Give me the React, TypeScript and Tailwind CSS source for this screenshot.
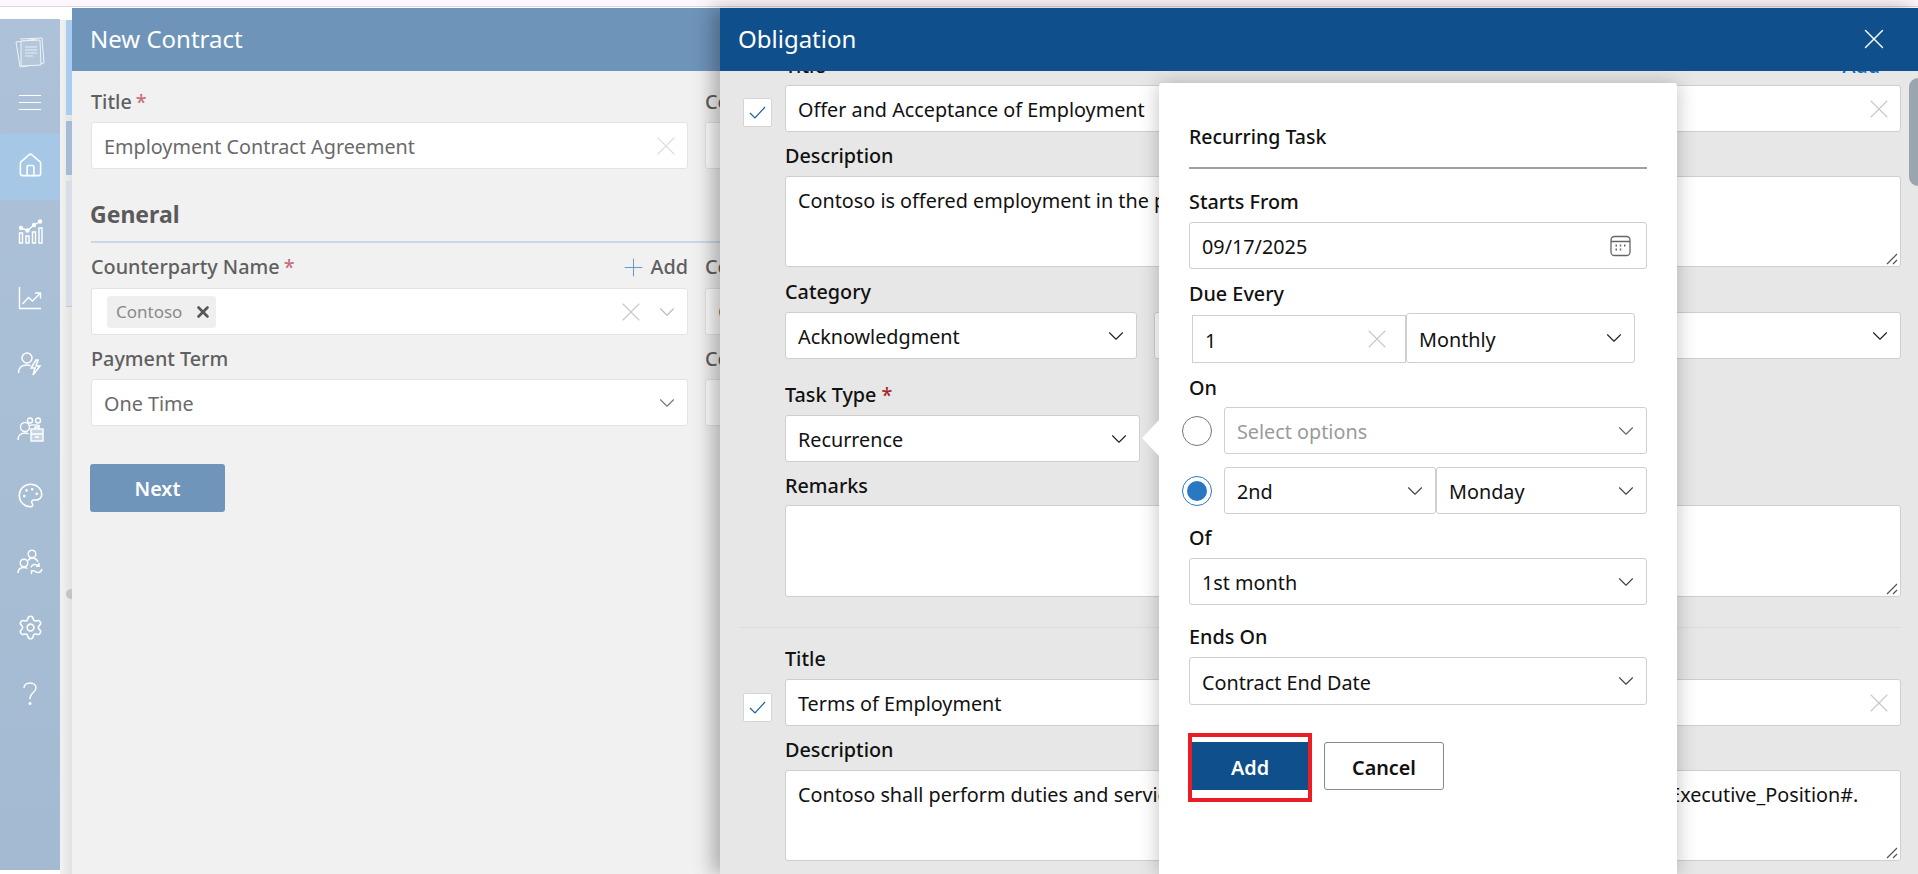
import { ReactNode } from "react";
import { ChevronDown, House, Palette, Plus, Settings, X } from "lucide-react";
import { twMerge } from "tailwind-merge";

const Logo = () => (
  <svg width="32" height="32" viewBox="0 0 32 32" fill="none" stroke="#fff" strokeWidth="1" opacity="0.8">
    <path d="M2 6 L22 3 L26 28 L6 31 Z" />
    <path d="M6 3 L28 2 L30 27 L10 30" />
    <path d="M7 5 L26 4 L27 29 L7 30 Z" fill="#b7c9dc" />
    <path d="M11 11h12M11 14h12M11 17h12M11 20h8" strokeWidth="1.4" opacity="0.6" />
  </svg>
);

const BarsIcon = () => (
  <svg width="25" height="25" viewBox="0 0 25 25" fill="none" stroke="#fff" strokeWidth="1.4">
    <path d="M1.500 14h3v10h-3zM8 17h3v7H8zM14.500 13h3v11h-3zM21 9h3v15h-3z" />
    <path d="M3 9l6.500 2.500L16 6l6-3.500" />
    <circle cx="3" cy="9" r="1.500" fill="#fff" />
    <circle cx="9.500" cy="11.500" r="1.500" fill="#fff" />
    <circle cx="16" cy="6" r="1.500" fill="#fff" />
    <circle cx="22" cy="2.500" r="1.500" fill="#fff" />
  </svg>
);

const TrendIcon = () => (
  <svg width="24" height="24" viewBox="0 0 24 24" fill="none" stroke="#fff" strokeWidth="1.4">
    <path d="M1.500 1v21.500H23" />
    <path d="M4.500 18l6-6.500 4 3.500 7.500-7.500" />
    <path d="M17 7h5.500v5.500" />
  </svg>
);

const UserBolt = () => (
  <svg width="26" height="26" viewBox="0 0 26 26" fill="none" stroke="#fff" strokeWidth="1.5">
    <circle cx="10" cy="7" r="5" />
    <path d="M1.500 22c0-5 3-8 8.500-8 1.500 0 2.500.2 3.500.6" />
    <path d="M19 9l-5 8h4l-2 7 7-9h-4l2-6z" />
  </svg>
);

const UsersCase = () => (
  <svg width="27" height="26" viewBox="0 0 27 26" fill="none" stroke="#fff" strokeWidth="1.4">
    <circle cx="8" cy="10" r="4.500" />
    <path d="M1 23c0-4.500 3-7 7-7 1.500 0 2.500.3 3.500.8" />
    <circle cx="13" cy="3.500" r="2.500" />
    <circle cx="21" cy="3.500" r="2.500" />
    <path d="M12 9c2-1.500 8-1.500 11 0" />
    <rect x="14" y="12" width="12" height="12" fill="#fff" fillOpacity="0.35" />
    <path d="M14 17h12M18 12V10h4v2M18 20h4" />
  </svg>
);

const UsersSync = () => (
  <svg width="26" height="26" viewBox="0 0 26 26" fill="none" stroke="#fff" strokeWidth="1.5">
    <circle cx="15" cy="5" r="3.800" />
    <circle cx="7" cy="14" r="3.800" />
    <path d="M1 24c0-3 2-5.500 6-5.500 1.500 0 2.500.3 3.500 1M11 11.500c1-1.500 2.500-2.500 4-2.500 3 0 5 1.500 6 4" />
    <path d="M14 18.500c.5-2 2-3 4-3 1.500 0 2.500.5 3.500 1.500M25 20c-.5 2-2 3.500-4 3.500-1.500 0-2.500-.5-3.500-1.500" />
    <path d="M22 14v3.200h-3M14.500 25v-3.200h3" />
  </svg>
);

const Question = () => (
  <svg width="16" height="24" viewBox="0 0 16 24" fill="none" stroke="#fff" strokeWidth="1.4">
    <path d="M2 6c0-3 2.500-5 6-5s6 2 6 5c0 4.500-6 4.500-6 10v1" />
    <circle cx="8" cy="21.500" r="0.800" fill="#fff" />
  </svg>
);

const CalendarIcon = () => (
  <svg className="mr-[5px]" width="21" height="22" viewBox="0 0 21 22" fill="none" stroke="#666" strokeWidth="1.300">
    <rect x="1" y="1.500" width="19" height="19" rx="3.500" />
    <path d="M1 6.500h19" />
    <path d="M5.500 10.500h1.500M9.800 10.500h1.500M14 10.500h1.500M5.500 14.500h1.500M9.800 14.500h1.500" strokeWidth="1.800" />
  </svg>
);

const Check = () => (
  <svg width="17" height="13" viewBox="0 0 17 13" fill="none" stroke="#1f5f9e" strokeWidth="1.200">
    <path d="M1 7l5 5L16 1" />
  </svg>
);

const Grip = () => (
  <svg className="absolute right-[2px] bottom-[1px]" width="12" height="12" viewBox="0 0 12 12" stroke="#555" strokeWidth="1.200">
    <path d="M1 11L11 1M7 11L11 7" />
  </svg>
);

const Chevron = ({ className }: { className?: string }) => (
  <ChevronDown size={26} strokeWidth={1} className={twMerge("shrink-0 -m-[3px] text-[#222]", className)} />
);

const Clear = ({ className }: { className?: string }) => (
  <X size={32} strokeWidth={0.8} className={twMerge("shrink-0 -m-[5px] text-[#c8c8c8]", className)} />
);

// Noto Sans sits a little high in the box
const Txt = ({ className, children }: { className?: string; children: ReactNode }) => (
  <span className={twMerge("pt-[3px] leading-[24px]", className)}>{children}</span>
);

const Box = ({ className, children }: { className?: string; children?: ReactNode }) => (
  <div className={twMerge("flex items-center bg-white border rounded-[3px] whitespace-nowrap overflow-hidden", className)}>
    {children}
  </div>
);

// dark form controls, in the Obligation panel and the popover
const Field = ({ className, children }: { className?: string; children?: ReactNode }) => (
  <Box className={twMerge("h-[47px] border-[#cfcfcf] pl-[12px] pr-[10px] justify-between text-[#111]", className)}>{children}</Box>
);

const Area = ({ className, children }: { className?: string; children?: ReactNode }) => (
  <div className={twMerge("relative h-[91px] bg-white border border-[#cfcfcf] rounded-[3px] pl-[12px] pt-[9px] text-[#111] whitespace-nowrap overflow-hidden", className)}>
    {children}
    <Grip />
  </div>
);

const Label = ({ className, children, req }: { className?: string; children: ReactNode; req?: boolean }) => (
  <div className={twMerge("h-[24px] leading-[24px] font-medium text-[#111]", className)}>
    {children}
    {req && <span className="ml-[5px] text-[#a4262c]">*</span>}
  </div>
);

const PaleLabel = ({ className, children, req }: { className?: string; children: ReactNode; req?: boolean }) => (
  <div className={twMerge("h-[24px] leading-[24px] font-medium text-[#5f5f5f] whitespace-nowrap", className)}>
    {children}
    {req && <span className="ml-[4px] text-[#c4707a]">*</span>}
  </div>
);

const PaleBox = ({ className, children }: { className?: string; children?: ReactNode }) => (
  <Box className={twMerge("h-[47px] border-[#e3e3e3] pl-[12px] pr-[10px] text-[#6a6a6a]", className)}>{children}</Box>
);

const navIcons = [
  <BarsIcon />,
  <TrendIcon />,
  <UserBolt />,
  <UsersCase />,
  <Palette size={27} strokeWidth={1.4} />,
  <UsersSync />,
  <Settings size={27} strokeWidth={1.4} />,
  <Question />,
];

const Sidebar = () => (
  <aside className="w-[60px] h-[851px] mt-[19px] shrink-0 flex flex-col items-center text-white bg-gradient-to-b from-[#adc2d8] to-[#a3bad2]">
    <div className="h-[66px] pt-[17px]">
      <Logo />
    </div>
    <div className="h-[49px] pt-[10px] flex flex-col gap-[6px]">
      <div className="w-[22px] h-px bg-white" />
      <div className="w-[22px] h-px bg-white" />
      <div className="w-[22px] h-px bg-white" />
    </div>
    <div className="w-full h-[66px] pb-[4px] bg-[#a7c7e7] rounded-[3px] flex items-center justify-center">
      <House size={27} strokeWidth={1.4} />
    </div>
    {navIcons.map((icon, i) => (
      <div key={i} className="w-full h-[66px] pb-[3px] flex items-center justify-center">
        {icon}
      </div>
    ))}
  </aside>
);

const BehindStrip = () => (
  <div className="relative w-[12px] h-[854px] mt-[20px] shrink-0 pl-[6px] flex flex-col gap-[6px] bg-gradient-to-r from-[#f2f2f2] to-[#e2e2e2]">
    <div className="h-[95px] bg-[#a9cdee]" />
    <div className="h-[54px] bg-[#a4bcd6]" />
    <div className="h-[126px] bg-[#d7dee8] border-b border-[#b9c8d8]" />
    <div className="absolute left-[6px] top-[569px] w-[6px] h-[10px] rounded-l-full bg-[#c4c4c4]" />
  </div>
);

const NewContract = () => (
  <section className="absolute left-[72px] top-[8px] w-[648px] h-[866px] bg-[#f1f1f1] overflow-hidden text-[19.800px]">
    <header className="h-[63px] pb-[2px] bg-[#6e94ba] flex items-center pl-[18px] text-[24px] text-white">New Contract</header>
    <div className="px-[19px] pt-[19px] w-[1300px]">
      <div className="grid grid-cols-[597px_597px] gap-x-[17px]">
        <div>
          <PaleLabel req>Title</PaleLabel>
          <PaleBox className="mt-[8px]">
            <Txt className="flex-1">Employment Contract Agreement</Txt>
            <Clear className="text-[#dddddd]" />
          </PaleBox>
        </div>
        <div>
          <PaleLabel>Contract Type</PaleLabel>
          <PaleBox className="mt-[8px]" />
        </div>
      </div>
      <h2 className="mt-[29px] -ml-px h-[32px] leading-[32px] text-[23px] font-bold text-[#5a5a5a]">General</h2>
      <div className="mt-[11px] h-[2px] bg-[#c9d8e8]" />
      <div className="mt-[12px] grid grid-cols-[597px_597px] gap-x-[17px]">
        <div>
          <div className="flex justify-between">
            <PaleLabel req>Counterparty Name</PaleLabel>
            <span className="flex items-center gap-[3px] text-[#5f5f5f] font-medium leading-[24px]">
              <Plus size={29} strokeWidth={0.8} className="text-[#5f95d0] -my-[3px]" />
              Add
            </span>
          </div>
          <PaleBox className="mt-[9px] pl-[15px]">
            <span className="flex items-center gap-[12px] h-[32px] pl-[9px] pr-[4px] rounded-[3px] bg-[#efefef] text-[17px] text-[#8a8a8a]">
              Contoso
              <X size={18} strokeWidth={3.500} className="text-[#555]" />
            </span>
            <span className="flex-1" />
            <Clear className="text-[#c8c8c8] mr-[10px]" />
            <Chevron className="text-[#bbbbbb]" />
          </PaleBox>
        </div>
        <div>
          <PaleLabel>Contract Owner</PaleLabel>
          <PaleBox className="mt-[9px]">Contoso Ltd</PaleBox>
        </div>
      </div>
      <div className="mt-[12px] grid grid-cols-[597px_597px] gap-x-[17px]">
        <div>
          <PaleLabel>Payment Term</PaleLabel>
          <PaleBox className="mt-[8px]">
            <Txt className="flex-1">One Time</Txt>
            <Chevron className="text-[#777777]" />
          </PaleBox>
        </div>
        <div>
          <PaleLabel>Contract Value</PaleLabel>
          <PaleBox className="mt-[8px]" />
        </div>
      </div>
      <button className="mt-[38px] -ml-px pt-[2px] w-[135px] h-[48px] rounded-[3px] bg-[#6f95bb] text-white font-semibold">
        Next
      </button>
    </div>
  </section>
);

const Checkbox = () => (
  <div className="w-[29px] h-[29px] bg-white border border-[#d5d5d5] rounded-[2px] flex items-center justify-center">
    <Check />
  </div>
);

const Obligation = () => (
  <section className="absolute left-[720px] top-[8px] w-[1198px] h-[866px] bg-[#e7e7e7] overflow-hidden text-[19.800px] shadow-[-8px_0_18px_rgba(0,0,0,0.28)] flex flex-col">
    <header className="h-[63px] pb-[2px] shrink-0 bg-[#0f4f8b] flex items-center justify-between pl-[18px] pr-[32px] text-[24px] text-white relative z-10">
      Obligation
      <X size={34} strokeWidth={1} className="-m-[5px]" />
    </header>
    <div className="relative flex-1 -mt-[17px]">
      <div className="flex">
        <div className="w-[65px] shrink-0 pl-[23px] pt-[44px]">
          <Checkbox />
        </div>
        <div className="w-[1116px]">
          <div className="flex justify-between pr-[21px]">
            <Label>Title</Label>
            <span className="text-[#0f6cbd] leading-[24px] font-medium">Add</span>
          </div>
          <Field className="mt-[7px]">
            <Txt>Offer and Acceptance of Employment</Txt>
            <Clear />
          </Field>
          <Label className="mt-[12px] mb-[8px]">Description</Label>
          <Area>Contoso is offered employment in the position of #Executive_Position#.</Area>
          <Label className="mt-[13px] mb-[8px]">Category</Label>
          <div className="flex gap-[17px]">
            <Field className="w-[352px]">
              <Txt>Acknowledgment</Txt>
              <Chevron />
            </Field>
            <Field className="flex-1 justify-end">
              <Chevron />
            </Field>
          </div>
          <Label className="mt-[24px] mb-[8px]" req>
            Task Type
          </Label>
          <Field className="w-[355px]">
            <Txt>Recurrence</Txt>
            <Chevron />
          </Field>
          <Label className="mt-[12px] mb-[7px]">Remarks</Label>
          <Area className="h-[92px]" />
        </div>
      </div>
      <div className="ml-[18px] mr-[17px] mt-[30px] h-px bg-[#dcdcdc]" />
      <div className="flex">
        <div className="w-[65px] shrink-0 pl-[23px] pt-[65px]">
          <Checkbox />
        </div>
        <div className="w-[1116px]">
          <Label className="mt-[19px] mb-[8px]">Title</Label>
          <Field>
            <Txt>Terms of Employment</Txt>
            <Clear />
          </Field>
          <Label className="mt-[12px] mb-[8px]">Description</Label>
          <Area>Contoso shall perform duties and services as described for the position held at Contoso as a #Executive_Position#.</Area>
        </div>
      </div>
      <div className="absolute right-0 top-[24px] w-[9px] h-[108px] rounded-l-full bg-[#9aa5ad]" />
    </div>
  </section>
);

const Radio = ({ checked }: { checked?: boolean }) => (
  <div
    className={twMerge(
      "w-[30px] h-[30px] shrink-0 rounded-full bg-white border flex items-center justify-center",
      checked ? "border-[#2b78c2]" : "border-[#777777]",
    )}
  >
    {checked && <div className="w-[20px] h-[20px] rounded-full bg-[#2b78c2]" />}
  </div>
);

const RecurringPopover = () => (
  <div className="absolute left-[1159px] top-[83px] w-[518px] h-[791px] bg-white rounded-t-[3px] shadow-[0_0_20px_rgba(0,0,0,0.25)] text-[19.800px] text-[#111]">
    <div className="absolute -left-[17px] top-[337px] w-0 h-0 border-y-[18px] border-y-transparent border-r-[17px] border-r-white" />
    <div className="px-[30px]">
      <div className="mt-[42px] h-[24px] leading-[24px] font-medium text-[19.500px]">Recurring Task</div>
      <div className="mt-[18px] h-[2px] bg-[#a0a0a0]" />
      <Label className="mt-[21px] mb-[8px]">Starts From</Label>
      <Field>
        <Txt>09/17/2025</Txt>
        <CalendarIcon />
      </Field>
      <Label className="mt-[13px] mb-[7px]">Due Every</Label>
      <div className="flex items-end ml-[3px]">
        <Field className="w-[214px] h-[48px] rounded-none">
          <Txt>1</Txt>
          <Clear className="mr-[2px]" />
        </Field>
        <Field className="w-[229px] h-[50px]">
          <Txt>Monthly</Txt>
          <Chevron />
        </Field>
      </div>
      <Label className="mt-[13px] mb-[7px]">On</Label>
      <div className="flex items-center -ml-[7px]">
        <Radio />
        <Field className="ml-[12px] flex-1 text-[#9a9a9a]">
          <Txt>Select options</Txt>
          <Chevron className="text-[#666666]" />
        </Field>
      </div>
      <div className="flex items-center -ml-[7px] mt-[13px]">
        <Radio checked />
        <Field className="ml-[12px] w-[212px]">
          <Txt>2nd</Txt>
          <Chevron className="text-[#444444]" />
        </Field>
        <Field className="flex-1">
          <Txt>Monday</Txt>
          <Chevron className="text-[#444444]" />
        </Field>
      </div>
      <Label className="mt-[12px] mb-[8px]">Of</Label>
      <Field>
        <Txt>1st month</Txt>
        <Chevron className="text-[#444444]" />
      </Field>
      <Label className="mt-[20px] mb-[8px]">Ends On</Label>
      <Field className="h-[48px]">
        <Txt>Contract End Date</Txt>
        <Chevron className="text-[#444444]" />
      </Field>
      <div className="mt-[28px] -ml-px flex items-start">
        <div className="w-[124px] h-[69px] border-[4px] border-[#ea1c24] pt-[5px]">
          <button className="w-full h-[48px] pt-[3px] bg-[#0f4f8b] text-white font-semibold">Add</button>
        </div>
        <button className="ml-[12px] mt-[9px] w-[120px] h-[48px] pt-[3px] bg-white border border-[#888888] rounded-[3px] font-semibold">
          Cancel
        </button>
      </div>
    </div>
  </div>
);

export default function App() {
  return (
    <div className="relative w-[1918px] h-[874px] overflow-hidden bg-white font-['Noto_Sans',sans-serif]">
      <div className="h-[6px] bg-[#fdf6fd] border-b border-[#dcd9e6] box-content" />
      <div className="absolute inset-x-0 top-0 flex">
        <Sidebar />
        <BehindStrip />
      </div>
      <NewContract />
      <Obligation />
      <RecurringPopover />
    </div>
  );
}
